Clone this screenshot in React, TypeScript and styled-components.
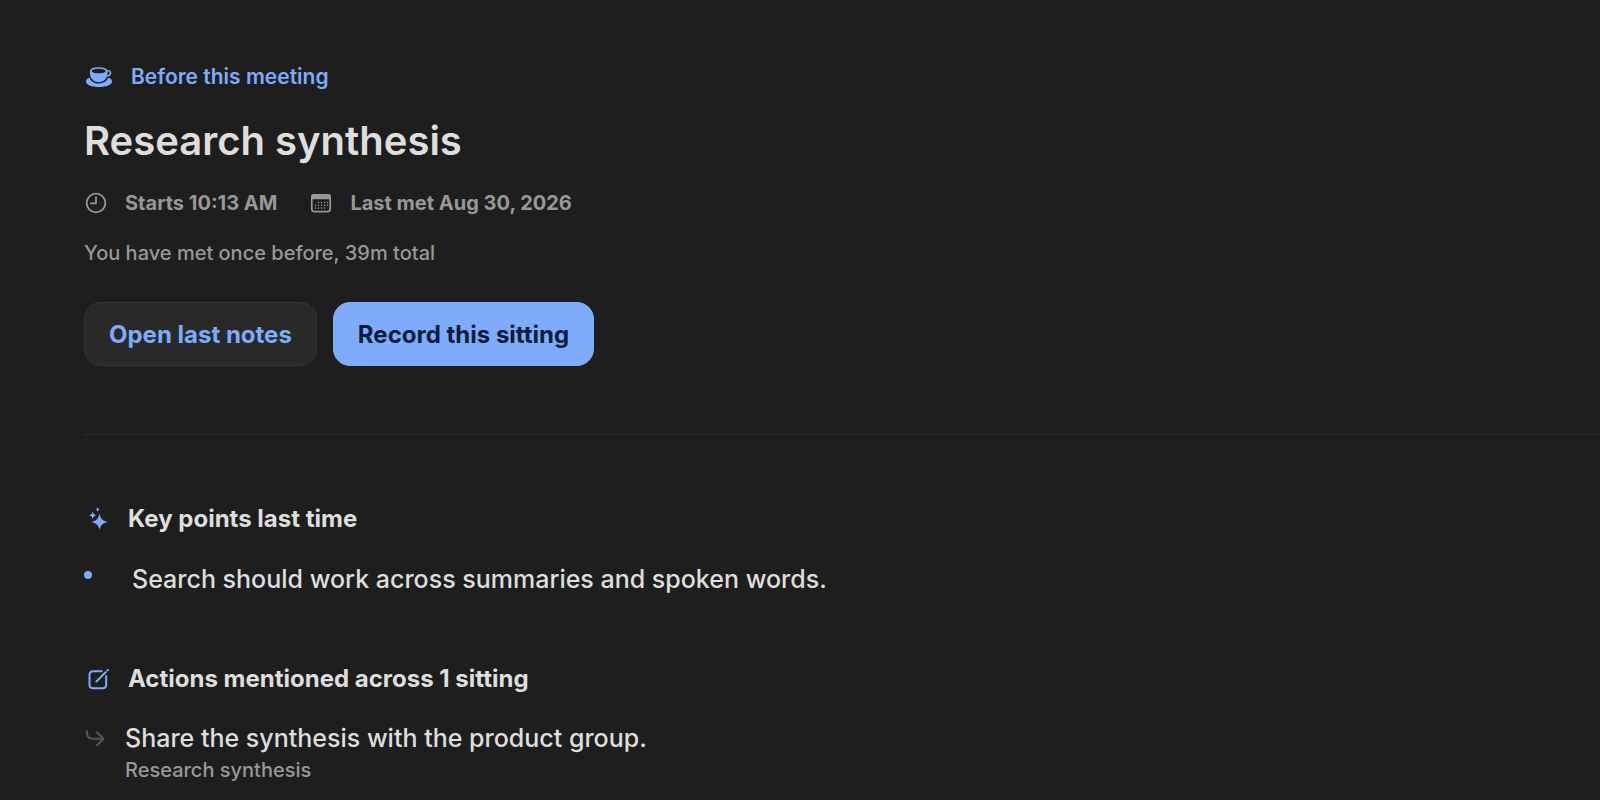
import React from "react";
import styled, { createGlobalStyle } from "styled-components";

const color = {
  page: "#1e1e1e",
  text: "#dedede",
  muted: "#989898",
  faint: "#565656",
  accent: "#7eabfa",
  onAccent: "#071c3c",
  surface: "#292929",
  border: "#343434",
  rule: "#2d2d2d",
};

const GlobalStyle = createGlobalStyle`
  *, *::before, *::after { box-sizing: border-box; }
  html { background: ${color.page}; }
  body {
    margin: 0;
    background: ${color.page};
    color: ${color.text};
    font-family: Inter, "Liberation Sans", sans-serif;
    -webkit-font-smoothing: antialiased;
  }
  h1, h2, p, ul { margin: 0; padding: 0; }
`;

const Page = styled.main`
  padding: 60px 0 0 84px;
`;

const Header = styled.header`
  display: flex;
  flex-direction: column;
  align-items: flex-start;
  padding-bottom: 68px;
  border-bottom: 1px solid ${color.rule};
`;

const Eyebrow = styled.p`
  display: flex;
  align-items: center;
  gap: 17px;
  font-size: 21px;
  line-height: 34px;
  font-weight: 600;
  color: ${color.accent};
`;

const Title = styled.h1`
  margin-top: 20px;
  font-size: 40px;
  line-height: 54px;
  font-weight: 600;
`;

const Meta = styled.div`
  display: flex;
  flex-wrap: wrap;
  gap: 32px;
  margin-top: 20px;
`;

const MetaItem = styled.p`
  display: flex;
  align-items: center;
  gap: 17px;
  font-size: 20px;
  line-height: 30px;
  font-weight: 700;
  color: ${color.muted};
`;

const History = styled.p`
  margin-top: 20px;
  font-size: 20px;
  line-height: 30px;
  font-weight: 500;
  color: ${color.muted};
`;

const Actions = styled.div`
  display: flex;
  flex-wrap: wrap;
  gap: 16px;
  margin-top: 34px;
`;

const Button = styled.button<{ $primary?: boolean }>`
  height: 64px;
  padding: 0 24px;
  border: 1px solid ${(p) => (p.$primary ? color.accent : color.border)};
  border-radius: 17px;
  background: ${(p) => (p.$primary ? color.accent : color.surface)};
  color: ${(p) => (p.$primary ? color.onAccent : color.accent)};
  font: inherit;
  font-size: 24px;
  font-weight: 700;
  cursor: pointer;
`;

const Section = styled.section<{ $first?: boolean }>`
  margin-top: ${(p) => (p.$first ? 68 : 64)}px;
`;

const SectionTitle = styled.h2`
  display: flex;
  align-items: center;
  gap: 16px;
  font-size: 24px;
  line-height: 32px;
  font-weight: 700;

  svg {
    color: ${color.accent};
  }
`;

const List = styled.ul`
  margin-top: 24px;
  list-style: none;
`;

const Point = styled.li`
  display: flex;
  align-items: flex-start;
  gap: 40px;
  font-size: 25px;
  line-height: 40px;
  font-weight: 500;
`;

const Dot = styled.span`
  flex: none;
  width: 8px;
  height: 8px;
  margin-top: 12px;
  border-radius: 50%;
  background: ${color.accent};
`;

const Task = styled.li`
  display: flex;
  align-items: flex-start;
  gap: 17px;
  font-size: 25px;
  line-height: 38px;
  font-weight: 500;
`;

const TaskIcon = styled.span`
  display: flex;
  align-items: center;
  height: 38px;
`;

const TaskSource = styled.p`
  font-size: 20px;
  line-height: 26px;
  font-weight: 500;
  color: ${color.muted};
`;

const Icon = styled.svg`
  display: block;
  flex: none;
`;

const CupIcon = () => (
  <Icon width="30" height="22" viewBox="0 0 30 22" aria-hidden="true">
    <path
      fill="currentColor"
      d="M2 15.5C2 13.6 3.3 12.3 5.6 11.7C6.9 15.3 10.4 17.5 14.8 17.5C19.2 17.5 22.7 15.4 24.1 11.8C26.7 12.3 28 13.6 28 15.5C28 18.8 22.5 21 15 21C7.5 21 2 18.8 2 15.5Z"
    />
    <path
      fill="currentColor"
      fillRule="evenodd"
      d="M6 5C6 2.6 9.8 1.2 14.7 1.2C19.1 1.2 22.5 2.4 23.2 4.2C25.5 3.7 27.3 5 27.3 7.1C27.3 9.5 25.3 11 22.9 10.6C21.6 14.2 18.6 16.2 14.7 16.2C9.5 16.2 6 12.4 6 7ZM14.7 2.7C10.7 2.7 7.7 3.700 7.7 5C7.7 6.4 10.7 7.3 14.7 7.3C18.7 7.3 21.7 6.4 21.7 5C21.7 3.7 18.7 2.7 14.7 2.7ZM23.4 5.7V7C23.4 7.8 23.3 8.5 23.2 9.2C24.7 9.3 25.8 8.4 25.8 7.1C25.8 5.9 24.7 5.2 23.4 5.7Z"
    />
  </Icon>
);

const ClockIcon = () => (
  <Icon width="24" height="24" viewBox="0 0 24 24" aria-hidden="true" fill="none" stroke="currentColor">
    <circle cx="12" cy="12" r="9.3" strokeWidth="1.8" />
    <path d="M12 6V12.4H7" strokeWidth="1.7" strokeLinecap="round" strokeLinejoin="round" />
  </Icon>
);

const DOTS: Array<[number, number]> = [
  [9.5, 11.5], [12.5, 11.5], [15.5, 11.5], [18.2, 11.5],
  [6.5, 14.3], [9.5, 14.3], [12.5, 14.3], [15.5, 14.3], [18.2, 14.3],
  [6.5, 17], [9.5, 17], [12.5, 17], [15.5, 17],
];

const CalendarIcon = () => (
  <Icon width="24" height="24" viewBox="0 0 24 24" aria-hidden="true">
    <rect x="2.8" y="3.8" width="18.4" height="16.9" rx="2.6" fill="none" stroke="currentColor" strokeWidth="1.7" />
    <path d="M2 8.3V6C2 4 3.2 3 5 3H19C20.8 3 22 4 22 6V8.3Z" fill="currentColor" />
    {DOTS.map(([x, y]) => (
      <rect key={`${x}-${y}`} x={x - 0.7} y={y - 0.7} width="1.4" height="1.4" rx="0.4" fill="currentColor" />
    ))}
  </Icon>
);

const SparklesIcon = () => (
  <Icon width="28" height="28" viewBox="0 0 28 28" aria-hidden="true" fill="currentColor">
    <path d="M15.5 8.6C16.5 13.6 18.1 15.6 23.6 17C18.1 18.4 16.500 20.200 15.5 25C14.5 20.200 12.9 18.4 7.5 17C12.9 15.6 14.5 13.6 15.5 8.6Z" />
    <path d="M8.7 6.2C9.2 8.8 10.1 9.600 12.7 10.2C10.1 10.800 9.2 11.600 8.7 14.2C8.2 11.600 7.3 10.800 4.7 10.2C7.3 9.600 8.2 8.800 8.7 6.2Z" />
    <path d="M13.7 2C14 3.7 14.6 4.3 16.300 4.600C14.6 4.900 14 5.500 13.7 7.200C13.400 5.500 12.800 4.900 11.100 4.600C12.800 4.300 13.400 3.700 13.7 2Z" />
  </Icon>
);

const ComposeIcon = () => (
  <Icon width="28" height="28" viewBox="0 0 28 28" aria-hidden="true" fill="none" stroke="currentColor">
    <path
      d="M17.7 6.3H9.2C6.6 6.3 5.500 7.5 5.5 10V19.5C5.5 22 6.6 23.2 9.2 23.2H18.5C21.1 23.2 22.2 22 22.2 19.5V11"
      strokeWidth="2"
      strokeLinecap="round"
    />
    <path d="M12.4 16.4L21.6 7.2" strokeWidth="2.1" strokeLinecap="round" />
    <path d="M23.4 5.4L23.9 4.9" strokeWidth="2.1" strokeLinecap="round" />
  </Icon>
);

const ReplyArrowIcon = () => (
  <Icon width="24" height="24" viewBox="0 0 24 24" aria-hidden="true" fill="none" stroke={color.faint} strokeWidth="2" strokeLinecap="round" strokeLinejoin="round">
    <path d="M3 5V7C3 11 4.8 12.8 8.8 12.8H19.2" />
    <path d="M13 6.300L19.5 12.8L13 19.300" />
  </Icon>
);

export default function App() {
  return (
    <>
      <GlobalStyle />
      <Page>
        <Header>
          <Eyebrow>
            <CupIcon />
            Before this meeting
          </Eyebrow>
          <Title>Research synthesis</Title>
          <Meta>
            <MetaItem>
              <ClockIcon />
              Starts 10:13 AM
            </MetaItem>
            <MetaItem>
              <CalendarIcon />
              Last met Aug 30, 2026
            </MetaItem>
          </Meta>
          <History>You have met once before, 39m total</History>
          <Actions>
            <Button type="button">Open last notes</Button>
            <Button type="button" $primary>
              Record this sitting
            </Button>
          </Actions>
        </Header>

        <Section $first>
          <SectionTitle>
            <SparklesIcon />
            Key points last time
          </SectionTitle>
          <List>
            <Point>
              <Dot />
              Search should work across summaries and spoken words.
            </Point>
          </List>
        </Section>

        <Section>
          <SectionTitle>
            <ComposeIcon />
            Actions mentioned across 1 sitting
          </SectionTitle>
          <List>
            <Task>
              <TaskIcon>
                <ReplyArrowIcon />
              </TaskIcon>
              <div>
                <p>Share the synthesis with the product group.</p>
                <TaskSource>Research synthesis</TaskSource>
              </div>
            </Task>
          </List>
        </Section>
      </Page>
    </>
  );
}
